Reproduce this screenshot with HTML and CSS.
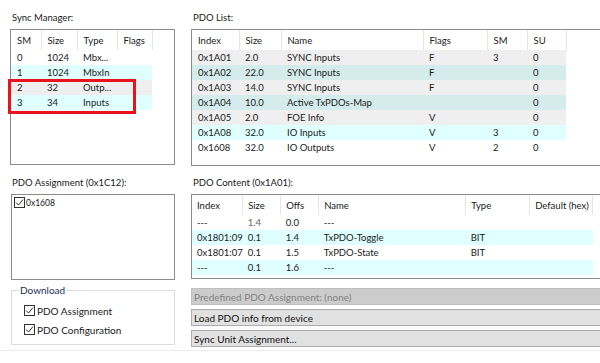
FILE: index.html
```html
<!DOCTYPE html>
<html lang="en">
<head>
  <meta charset="UTF-8" />
  <title>Process Data</title>
  <link rel="stylesheet" href="styles.css">
</head>
<body>

  <div class="page">
    <div class="left">
      <div class="label">Sync Manager:</div>
      <div class="box sm-box">
        <table class="grid sm-grid">
          <tr class="head"><th class="c30">SM</th><th class="c36">Size</th><th class="c40">Type</th><th class="c35">Flags</th></tr>
          <tr><td>0</td><td>1024</td><td>Mbx...</td><td></td></tr>
          <tr class="cyan"><td>1</td><td>1024</td><td>MbxIn</td><td></td></tr>
          <tr class="grey"><td>2</td><td>32</td><td>Outp...</td><td></td></tr>
          <tr class="cyan"><td>3</td><td>34</td><td>Inputs</td><td></td></tr>
        </table>
        <div class="highlight"></div>
      </div>

      <div class="label">PDO Assignment (0x1C12):</div>
      <div class="box assign-box">
        <div class="assign-item">
          <span class="check">
            <svg width="9" height="9" viewBox="0 0 9 9"><path d="M1 4.5 L3.5 7 L8 1.5" fill="none" stroke="#333" stroke-width="1"/></svg>
          </span>
          <span>0x1608</span>
        </div>
      </div>

      <fieldset class="download">
        <legend>Download</legend>
        <label class="opt">
          <span class="check">
            <svg width="9" height="9" viewBox="0 0 9 9"><path d="M1 4.5 L3.5 7 L8 1.5" fill="none" stroke="#333" stroke-width="1"/></svg>
          </span>
          PDO Assignment
        </label>
        <label class="opt">
          <span class="check">
            <svg width="9" height="9" viewBox="0 0 9 9"><path d="M1 4.5 L3.5 7 L8 1.5" fill="none" stroke="#333" stroke-width="1"/></svg>
          </span>
          PDO Configuration
        </label>
      </fieldset>
    </div>

    <div class="right">
      <div class="label">PDO List:</div>
      <div class="box list-box">
        <table class="grid list-grid">
          <tr class="head"><th class="c47">Index</th><th class="c42">Size</th><th class="c142">Name</th><th class="c64">Flags</th><th class="c40">SM</th><th class="c39">SU</th></tr>
          <tr class="grey"><td>0x1A01</td><td>2.0</td><td>SYNC Inputs</td><td>F</td><td>3</td><td>0</td></tr>
          <tr class="teal"><td>0x1A02</td><td>22.0</td><td>SYNC Inputs</td><td>F</td><td></td><td>0</td></tr>
          <tr class="grey"><td>0x1A03</td><td>14.0</td><td>SYNC Inputs</td><td>F</td><td></td><td>0</td></tr>
          <tr class="teal"><td>0x1A04</td><td>10.0</td><td>Active TxPDOs-Map</td><td></td><td></td><td>0</td></tr>
          <tr class="grey"><td>0x1A05</td><td>2.0</td><td>FOE Info</td><td>V</td><td></td><td>0</td></tr>
          <tr class="cyan"><td>0x1A08</td><td>32.0</td><td>IO Inputs</td><td>V</td><td>3</td><td>0</td></tr>
          <tr><td>0x1608</td><td>32.0</td><td>IO Outputs</td><td>V</td><td>2</td><td>0</td></tr>
        </table>
      </div>

      <div class="label">PDO Content (0x1A01):</div>
      <div class="box content-box">
        <table class="grid content-grid">
          <tr class="head"><th class="c48">Index</th><th class="c38">Size</th><th class="c38">Offs</th><th class="c147">Name</th><th class="c64">Type</th><th class="c63">Default (hex)</th></tr>
          <tr><td>---</td><td class="dim">1.4</td><td>0.0</td><td>---</td><td></td><td></td></tr>
          <tr class="cyan"><td>0x1801:09</td><td>0.1</td><td>1.4</td><td>TxPDO-Toggle</td><td>BIT</td><td></td></tr>
          <tr><td>0x1801:07</td><td>0.1</td><td>1.5</td><td>TxPDO-State</td><td>BIT</td><td></td></tr>
          <tr class="cyan"><td>---</td><td>0.1</td><td>1.6</td><td>---</td><td></td><td></td></tr>
        </table>
      </div>

      <div class="buttons">
        <button class="btn" disabled>Predefined PDO Assignment: (none)</button>
        <button class="btn">Load PDO info from device</button>
        <button class="btn">Sync Unit Assignment...</button>
      </div>
    </div>
  </div>

  <div class="bottom-line"></div>

</body>
</html>
```

FILE: styles.css
```css
body {
  margin: 0;
  background: #fff;
  font-family: Lato, "Noto Sans", sans-serif;
  font-size: 9.5px;
  color: #1a1a1a;
  overflow: hidden;
}

.page {
  display: flex;
  gap: 16px;
  padding: 10px 0 0 10px;
}

.left {
  width: 165px;
  flex-shrink: 0;
  display: flex;
  flex-direction: column;
}

.right {
  width: 420px;
  flex-shrink: 0;
  display: flex;
  flex-direction: column;
}

.label {
  height: 15px;
  line-height: 15px;
  padding-left: 2px;
  margin-bottom: 4px;
}

.box {
  border: 1px solid #8c8c8c;
  background: #fff;
  position: relative;
}

.sm-box { height: 134px; margin-bottom: 10px; }
.list-box { height: 135px; margin-bottom: 9px; }
.assign-box { height: 84px; margin: 0 0 4px 1px; }
.content-box { height: 83px; margin-bottom: 9px; }

.grid {
  border-collapse: collapse;
  table-layout: fixed;
}

.grid th,
.grid td {
  box-sizing: border-box;
  padding: 0 0 0 6px;
  text-align: left;
  white-space: nowrap;
  overflow: hidden;
}

.grid th {
  height: 20px;
  font-weight: normal;
  border-right: 1px solid #e5e5e5;
}

.grid td {
  height: 15px;
}

.content-grid th, .content-grid td { padding-left: 5px; }

.grey { background: #efefef; }
.teal { background: #d4ecec; }
.cyan { background: #e0ffff; }
.dim { color: #666; }

.c30 { width: 30px; }
.c35 { width: 35px; }
.c36 { width: 36px; }
.c38 { width: 38px; }
.c39 { width: 39px; }
.c40 { width: 40px; }
.c42 { width: 42px; }
.c47 { width: 47px; }
.c48 { width: 48px; }
.c63 { width: 63px; }
.c64 { width: 64px; }
.c142 { width: 142px; }
.c147 { width: 147px; }

.highlight {
  position: absolute;
  left: -3px;
  top: 49px;
  width: 122px;
  height: 29px;
  border: 3px solid #e8141b;
}

.assign-item {
  display: flex;
  align-items: center;
  gap: 1px;
  padding: 2px 0 0 2px;
  font-size: 8.5px;
}

.check {
  display: inline-flex;
  align-items: center;
  justify-content: center;
  width: 11px;
  height: 11px;
  border: 1px solid #333;
  box-sizing: border-box;
  background: #fff;
}

.download {
  margin: 0 0 0 1px;
  padding: 5px 0 8px 12px;
  border: 1px solid #dcdcdc;
  height: 46px;
}

.download legend {
  padding: 0 1px;
  margin-left: -5px;
  font-size: 10px;
  color: #1e2e55;
}

.opt {
  display: flex;
  align-items: center;
  gap: 2px;
  height: 19px;
  font-size: 10px;
}

.buttons {
  display: flex;
  flex-direction: column;
  gap: 4px;
}

.btn {
  height: 17px;
  margin: 0;
  padding: 0 0 0 2px;
  text-align: left;
  font: inherit;
  font-size: 10px;
  color: #111;
  background: #e1e1e1;
  border: 1px solid #adadad;
}

.btn:disabled {
  background: #cccccc;
  border-color: #bfbfbf;
  color: #838383;
}

.bottom-line {
  margin-top: 3px;
  border-top: 1px solid #ececec;
}
```
